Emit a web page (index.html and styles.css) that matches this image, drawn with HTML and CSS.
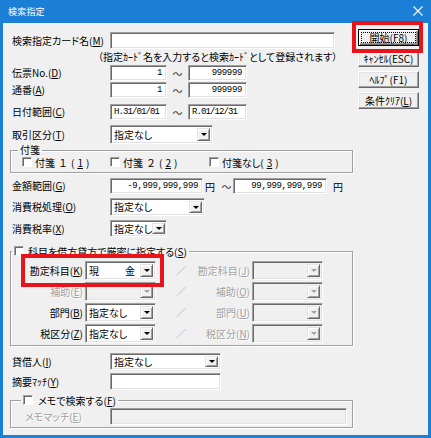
FILE: index.html
```html
<!DOCTYPE html>
<html lang="ja">
<head>
<meta charset="utf-8">
<title>検索指定</title>
<link rel="stylesheet" href="styles.css">
</head>
<body>
<div class="window">
  <div class="titlebar">
    <span class="title">検索指定</span>
    <svg class="close" width="10" height="10" viewBox="0 0 10 10"><path d="M0.5 0.5L9.5 9.5M9.5 0.5L0.5 9.5" stroke="#fff" stroke-width="1.1" fill="none"/></svg>
  </div>
  <div class="client">
    <div class="main">
      <div class="row r-card"><span class="lbl">検索指定カード名(<u>M</u>)</span><span class="tb w-card"></span></div>
      <div class="note">（指定ｶｰﾄﾞ名を入力すると検索ｶｰﾄﾞとして登録されます）</div>
      <div class="row r-slip"><span class="lbl">伝票No.(<u>D</u>)</span><span class="tb num w-from">1</span><span class="tilde">～</span><span class="tb num w-to">999999</span></div>
      <div class="row r-seq"><span class="lbl">通番(<u>A</u>)</span><span class="tb num w-from">1</span><span class="tilde">～</span><span class="tb num w-to">999999</span></div>
      <div class="row r-date"><span class="lbl">日付範囲(<u>C</u>)</span><span class="tb date w-from">H.31/01/01</span><span class="tilde">～</span><span class="tb date w-to">R.01/12/31</span></div>
      <div class="row r-trade"><span class="lbl">取引区分(<u>T</u>)</span><span class="cb w-trade"><span class="val">指定なし</span><span class="dd"><i class="arrow"></i></span></span></div>

      <fieldset class="grp grp-fusen">
        <legend class="lg-fusen">付箋</legend>
        <div class="fusen-row">
          <span class="opt opt-1"><span class="chk"></span>付箋<span class="fw">１</span>(<u>1</u>)</span>
          <span class="opt opt-2"><span class="chk"></span>付箋<span class="fw">２</span>(<u>2</u>)</span>
          <span class="opt"><span class="chk"></span>付箋なし(<u>3</u>)</span>
        </div>
      </fieldset>

      <div class="row r-amount"><span class="lbl">金額範囲(<u>G</u>)</span><span class="tb num w-amt1">-9,999,999,999</span><span class="yen">円</span><span class="tilde2">～</span><span class="tb num w-amt2">99,999,999,999</span><span class="yen yen2">円</span></div>
      <div class="row r-taxproc"><span class="lbl">消費税処理(<u>O</u>)</span><span class="cb w-taxproc"><span class="val">指定なし</span><span class="dd"><i class="arrow"></i></span></span></div>
      <div class="row r-taxrate"><span class="lbl">消費税率(<u>X</u>)</span><span class="cb w-taxrate"><span class="val">指定なし</span><span class="dd"><i class="arrow"></i></span></span></div>

      <fieldset class="grp grp-kamoku">
        <legend class="lg-kamoku"><span class="chk"></span><span>科目を借方貸方で厳密に指定する(<u>S</u>)</span></legend>
        <div class="k-rows">
          <div class="krow">
            <span class="klbl">勘定科目(<u>K</u>)</span>
            <span class="cb w-k"><span class="val">現<span class="sp"></span>金</span><span class="dd"><i class="arrow"></i></span></span>
            <span class="slash">／</span>
            <span class="klbl2 dis">勘定科目(<u>J</u>)</span>
            <span class="cb w-k off"><span class="val"></span><span class="dd"><i class="arrow"></i></span></span>
          </div>
          <div class="krow">
            <span class="klbl dis">補助(<u>E</u>)</span>
            <span class="cb w-k off"><span class="val"></span><span class="dd"><i class="arrow"></i></span></span>
            <span class="slash">／</span>
            <span class="klbl2 dis">補助(<u>Q</u>)</span>
            <span class="cb w-k off"><span class="val"></span><span class="dd"><i class="arrow"></i></span></span>
          </div>
          <div class="krow">
            <span class="klbl">部門(<u>B</u>)</span>
            <span class="cb w-k"><span class="val">指定なし</span><span class="dd"><i class="arrow"></i></span></span>
            <span class="slash">／</span>
            <span class="klbl2 dis">部門(<u>U</u>)</span>
            <span class="cb w-k off"><span class="val"></span><span class="dd"><i class="arrow"></i></span></span>
          </div>
          <div class="krow">
            <span class="klbl">税区分(<u>Z</u>)</span>
            <span class="cb w-k"><span class="val">指定なし</span><span class="dd"><i class="arrow"></i></span></span>
            <span class="slash">／</span>
            <span class="klbl2 dis">税区分(<u>N</u>)</span>
            <span class="cb w-k off"><span class="val"></span><span class="dd"><i class="arrow"></i></span></span>
          </div>
        </div>
      </fieldset>

      <div class="row r-lender"><span class="lbl">貸借人(<u>I</u>)</span><span class="cb w-lender"><span class="val">指定なし</span><span class="dd"><i class="arrow"></i></span></span></div>
      <div class="row r-match"><span class="lbl">摘要ﾏｯﾁ(<u>Y</u>)</span><span class="tb w-lender"></span></div>

      <fieldset class="grp grp-memo">
        <legend class="lg-memo"><span class="chk"></span><span>メモで検索する(<u>F</u>)</span></legend>
        <div class="memo-row"><span class="mlbl dis">メモマッチ(<u>E</u>)</span><span class="tb off w-memo"></span></div>
      </fieldset>
    </div>

    <div class="side">
      <div class="btn default"><span class="focus">開始(F8)</span></div>
      <div class="btn">ｷｬﾝｾﾙ(ESC)</div>
      <div class="btn">ﾍﾙﾌﾟ(F1)</div>
      <div class="btn">条件ｸﾘｱ(<u>L</u>)</div>
    </div>
  </div>
  <div class="hl hl-start"></div>
  <div class="hl hl-kamoku"></div>
</div>
</body>
</html>
```

FILE: styles.css
```css
* { box-sizing: border-box; }
html, body { margin: 0; padding: 0; }
body {
  width: 431px;
  height: 438px;
  overflow: hidden;
  font-family: "Noto Sans CJK JP", "Noto Sans", sans-serif;
  font-size: 10px;
  color: #000;
  font-feature-settings: "palt";
}
u { text-underline-offset: 1px; }
.fw { font-feature-settings: normal; }

.window {
  position: relative;
  width: 431px;
  height: 438px;
  background: #1c7fd6;
  padding: 0 3px 3px 3px;
  display: flex;
  flex-direction: column;
}
.titlebar {
  height: 23px;
  flex: none;
  display: flex;
  align-items: center;
  justify-content: space-between;
  color: #fff;
  padding: 0 5px 1px 5px;
}
.title { font-size: 9px; letter-spacing: 0.2px; }
.close { display: block; }

.client {
  flex: 1;
  background: #f0f0f0;
  display: flex;
  align-items: flex-start;
  padding-left: 7px;
}
.main {
  width: 343px;
  flex: none;
  display: flex;
  flex-direction: column;
  padding-top: 9px;
}
.side {
  width: 61px;
  margin-left: 5px;
  padding-top: 6px;
  display: flex;
  flex-direction: column;
  gap: 4px;
}

/* rows */
.row { display: flex; align-items: center; }
.lbl { width: 100px; flex: none; padding-left: 2px; white-space: nowrap; line-height: 12px; }
.r-card { height: 17px; }
.note { height: 14px; margin-top: 1px; line-height: 14px; padding-left: 88px; white-space: nowrap; }
.r-slip { height: 16px; margin-top: 1px; }
.r-seq { height: 16px; margin-top: 1px; }
.r-date { height: 16px; margin-top: 6px; }
.r-trade { height: 19px; margin-top: 5px; }
.r-amount { height: 16px; margin-top: 5px; }
.r-taxproc { height: 18px; margin-top: 4px; }
.r-taxrate { height: 17px; margin-top: 4px; }
.r-lender { height: 17px; margin-top: 7px; }
.r-match { height: 17px; margin-top: 3px; }

/* text boxes */
.tb {
  height: 100%;
  flex: none;
  background: #fff;
  border-style: solid;
  border-width: 1px;
  border-color: #a0a0a0 #fff #fff #a0a0a0;
  box-shadow: inset 1px 1px 0 #696969, inset -1px -1px 0 #e3e3e3;
  display: flex;
  align-items: center;
}
.tb.off { background: #f0f0f0; }
.num {
  justify-content: flex-end;
  padding-right: 4px;
  font-family: "Liberation Mono", "DejaVu Sans Mono", monospace;
  font-size: 9px;
  letter-spacing: -0.35px;
}
.date {
  padding-left: 3px;
  font-family: "Liberation Mono", "DejaVu Sans Mono", monospace;
  font-size: 9px;
  letter-spacing: -0.9px;
}
.w-card { width: 225px; }
.w-from { width: 57px; }
.w-to { width: 59px; }
.w-amt1 { width: 93px; }
.w-amt2 { width: 94px; }
.w-lender { width: 111px; }
.w-memo { width: 237px; }

.tilde { width: 21px; text-align: center; flex: none; color: #333; }
.yen { margin-left: 2px; width: 12px; }
.tilde2 { margin-left: 3px; width: 13px; text-align: center; color: #333; }
.yen2 { margin-left: 6px; }

/* combo boxes */
.cb {
  height: 100%;
  flex: none;
  display: flex;
  background: #fff;
  border-style: solid;
  border-width: 1px;
  border-color: #a0a0a0 #fff #fff #a0a0a0;
  box-shadow: inset 1px 1px 0 #696969, inset -1px -1px 0 #e3e3e3;
  padding: 2px 2px 2px 2px;
}
.cb .val {
  flex: 1;
  display: flex;
  align-items: center;
  padding-left: 1px;
  white-space: nowrap;
  line-height: 12px;
}
.cb .dd {
  width: 13px;
  flex: none;
  background: #f0f0f0;
  border-style: solid;
  border-width: 1px;
  border-color: #e3e3e3 #696969 #696969 #e3e3e3;
  box-shadow: inset 1px 1px 0 #fff, inset -1px -1px 0 #a0a0a0;
  display: flex;
  align-items: center;
  justify-content: center;
}
.arrow {
  display: block;
  width: 0;
  height: 0;
  border-left: 3px solid transparent;
  border-right: 3px solid transparent;
  border-top: 3px solid #000;
}
.cb.off { background: #f0f0f0; }
.cb.off .arrow { border-top-color: #a0a0a0; }
.w-trade { width: 103px; }
.w-taxproc { width: 95px; }
.w-taxrate { width: 57px; }
.w-k { width: 71px; }
.sp { display: inline-block; width: 26px; }

/* group boxes */
.grp {
  margin: 0;
  padding: 0;
  min-width: 0;
  border: 1px solid #a0a0a0;
  box-shadow: inset 1px 1px 0 #fff, 1px 1px 0 #fff;
}
.grp legend {
  padding: 0 2px;
  display: flex;
  align-items: center;
  white-space: nowrap;
}
.grp-fusen { margin-top: 1px; }
.lg-fusen { margin-left: 7px; height: 10px; line-height: 10px; }
.fusen-row { display: flex; align-items: center; height: 12px; margin: 1px 0 4px 0; padding-left: 11px; }
.opt { display: flex; align-items: center; gap: 3px; white-space: nowrap; }
.opt-1 { width: 88px; }
.opt-2 { width: 99px; }

.chk {
  display: inline-block;
  flex: none;
  width: 10px;
  height: 10px;
  background: #fff;
  border-style: solid;
  border-width: 1px;
  border-color: #a0a0a0 #fff #fff #a0a0a0;
  box-shadow: inset 1px 1px 0 #696969;
}

.grp-kamoku { margin-top: 8px; }
.lg-kamoku { margin-left: 1px; height: 12px; gap: 4px; }
.k-rows { display: flex; flex-direction: column; gap: 2px; padding: 4px 29px 2px 0; }
.krow { display: flex; align-items: center; height: 19px; }
.klbl { width: 72px; flex: none; margin-right: 2px; text-align: right; white-space: nowrap; }
.slash { width: 40px; flex: none; padding-left: 20px; color: #a0a0a0; }
.klbl2 { flex: 1; margin-right: 2px; text-align: right; white-space: nowrap; }
.dis { color: #a0a0a0; text-shadow: 1px 1px 0 #fff; }

.grp-memo { margin-top: 4px; }
.lg-memo { margin-left: 10px; height: 12px; gap: 5px; }
.memo-row { display: flex; align-items: center; height: 17px; margin: 2px 0 2px 0; padding-left: 14px; }
.mlbl { width: 85px; flex: none; white-space: nowrap; }

/* buttons */
.btn {
  height: 17px;
  display: flex;
  align-items: center;
  justify-content: center;
  background: #f0f0f0;
  border-style: solid;
  border-width: 1px;
  border-color: #fff #696969 #696969 #fff;
  box-shadow: inset -1px -1px 0 #a0a0a0, inset 1px 1px 0 #e3e3e3;
  white-space: nowrap;
  line-height: 12px;
}
.btn.default {
  border-color: #000;
  box-shadow: inset 1px 1px 0 #fff, inset -1px -1px 0 #696969, inset -2px -2px 0 #a0a0a0;
  padding: 2px;
}
.focus {
  flex: 1;
  align-self: stretch;
  display: flex;
  align-items: center;
  justify-content: center;
  border: 1px dotted #000;
}

/* red highlight overlays */
.hl {
  position: absolute;
  border: 4px solid #e8141b;
  pointer-events: none;
}
.hl-start { left: 352px; top: 21px; width: 71px; height: 32px; }
.hl-kamoku { left: 21px; top: 254px; width: 143px; height: 33px; }
```
